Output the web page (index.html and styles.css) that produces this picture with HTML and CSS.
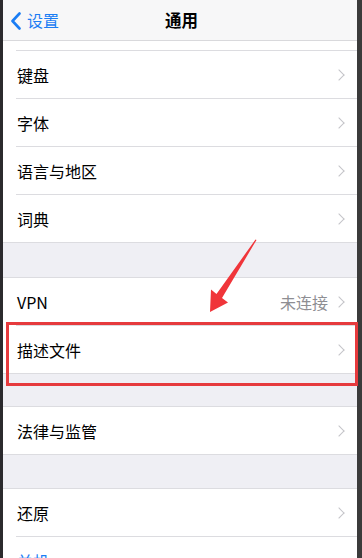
FILE: index.html
```
<!DOCTYPE html>
<html lang="zh-CN">
<head>
<meta charset="utf-8">
<title>通用</title>
<link rel="stylesheet" href="styles.css">
</head>
<body>
<div class="frame">
  <div class="edge edge-left"></div>
  <div class="screen">
    <header class="nav">
      <div class="back">
        <svg class="back-icon" width="12" height="18" viewBox="0 0 12 18"><path d="M9.5 1.5 L2.5 9 L9.5 16.5" fill="none" stroke="#1a7df4" stroke-width="2.6" stroke-linecap="round" stroke-linejoin="round"/></svg>
        <span class="back-text">设置</span>
      </div>
      <div class="title">通用</div>
    </header>

    <section class="group group-first">
      <div class="partial"></div>
      <div class="row"><span class="label">键盘</span><span class="chev"></span></div>
      <div class="row"><span class="label">字体</span><span class="chev"></span></div>
      <div class="row"><span class="label">语言与地区</span><span class="chev"></span></div>
      <div class="row"><span class="label">词典</span><span class="chev"></span></div>
    </section>
    <div class="gap gap-1"></div>

    <section class="group">
      <div class="row"><span class="label">VPN</span><span class="value">未连接</span><span class="chev"></span></div>
      <div class="row"><span class="label">描述文件</span><span class="chev"></span></div>
    </section>
    <div class="gap gap-2"></div>

    <section class="group">
      <div class="row"><span class="label">法律与监管</span><span class="chev"></span></div>
    </section>
    <div class="gap gap-3"></div>

    <section class="group">
      <div class="row"><span class="label">还原</span><span class="chev"></span></div>
      <div class="row"><span class="label link">关机</span></div>
    </section>
  </div>
  <div class="edge edge-right"></div>

  <div class="highlight"></div>
  <svg class="arrow" width="60" height="80" viewBox="0 0 60 80">
    <polygon points="57.5,1 23,59 29,63.5 11,73 12,50.5 17.5,55 56.5,0.5" fill="#f0353a"/>
  </svg>
</div>
</body>
</html>
```
FILE: styles.css
```
html, body {
  margin: 0;
  padding: 0;
  background: #2f2f2f;
}
body {
  font-family: "Noto Sans CJK SC", "Noto Sans", sans-serif;
  width: 362px;
  height: 558px;
  overflow: hidden;
}
.frame {
  position: relative;
  display: flex;
  width: 362px;
  height: 558px;
  overflow: hidden;
}
.edge {
  flex: none;
  height: 558px;
}
.edge-left {
  width: 3px;
  background: #2b2a2d;
}
.edge-right {
  width: 5px;
  background: #3b3b3b;
}
.screen {
  flex: 1;
  background: #efeff4;
  height: 558px;
  overflow: hidden;
}
.nav {
  position: relative;
  height: 40px;
  background: #f7f7f8;
  border-bottom: 1px solid #d9d9dc;
  display: flex;
  align-items: center;
  justify-content: center;
}
.back {
  position: absolute;
  left: 7px;
  top: 0;
  height: 40px;
  display: flex;
  align-items: center;
  gap: 5px;
}
.back-icon {
  display: block;
  margin-top: 1px;
}
.back-text {
  color: #1a7df4;
  font-size: 16px;
  line-height: 20px;
}
.title {
  font-size: 16.5px;
  font-weight: 600;
  color: #000;
  margin-left: 3px;
  line-height: 20px;
}
.group {
  background: #fff;
  border-top: 1px solid #dcdce0;
  border-bottom: 1px solid #dcdce0;
}
.group-first {
  border-top: none;
}
.partial {
  height: 9px;
}
.row {
  height: 47px;
  margin-left: 13px;
  padding-right: 11px;
  display: flex;
  align-items: center;
  border-top: 1px solid #dcdce0;
}
.group > .row:first-child {
  border-top: none;
}
.label {
  flex: 1;
  font-size: 16px;
  color: #000;
  padding-left: 1px;
  line-height: 20px;
}
.link {
  color: #1a7df4;
}
.value {
  font-size: 16px;
  color: #8e8e93;
  margin-right: 10px;
  line-height: 20px;
}
.chev {
  width: 8px;
  height: 12px;
  position: relative;
}
.chev::before {
  content: "";
  position: absolute;
  left: -3px;
  top: 2px;
  width: 7px;
  height: 7px;
  border-top: 1.6px solid #c4c4c8;
  border-right: 1.6px solid #c4c4c8;
  transform: rotate(45deg);
}
.gap-1 {
  height: 34px;
}
.gap-2 {
  height: 32px;
}
.gap-3 {
  height: 33px;
}
.highlight {
  position: absolute;
  left: 6px;
  top: 322px;
  width: 346px;
  height: 58px;
  border: 3px solid #e63a3d;
}
.arrow {
  position: absolute;
  left: 199px;
  top: 239px;
}
```
